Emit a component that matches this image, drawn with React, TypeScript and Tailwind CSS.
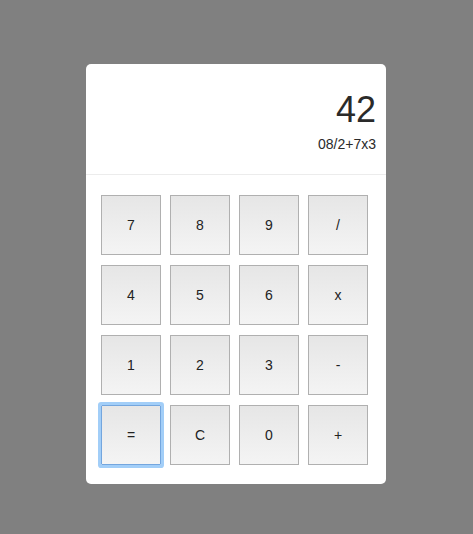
const KEYS = ["7", "8", "9", "/", "4", "5", "6", "x", "1", "2", "3", "-", "=", "C", "0", "+"];

function Key({ label, focused }: { label: string; focused?: boolean }) {
  return (
    <button
      type="button"
      className={`flex h-[60px] w-[60px] items-center justify-center border bg-gradient-to-b from-[#e6e6e6] to-[#f4f4f4] text-[14px] text-[#222] ${
        focused
          ? "rounded-[1px] border-[#74a6de] shadow-[0_0_0_3px_#a2cef8]"
          : "border-[#b0b0b0]"
      }`}
    >
      {label}
    </button>
  );
}

export default function App() {
  return (
    <div
      className="min-h-[534px] bg-[#808080] pl-[86px] pt-[64px]"
      style={{ fontFamily: '"Liberation Sans", Arial, sans-serif' }}
    >
      <div className="h-[420px] w-[300px] overflow-hidden rounded-[5px] bg-white">
        {/* display */}
        <div className="h-[111px] border-b border-[#ececec] pr-[10px] pt-[28px] text-right text-[#2a2a2a]">
          <div className="text-[36px] leading-[36px]">42</div>
          <div className="mt-[9px] text-[14px] leading-[14px]">08/2+7x3</div>
        </div>

        {/* keypad */}
        <div className="grid grid-cols-[repeat(4,60px)] gap-x-[9px] gap-y-[10px] pl-[15px] pt-[20px]">
          {KEYS.map((k) => (
            <Key key={k} label={k} focused={k === "="} />
          ))}
        </div>
      </div>
    </div>
  );
}
